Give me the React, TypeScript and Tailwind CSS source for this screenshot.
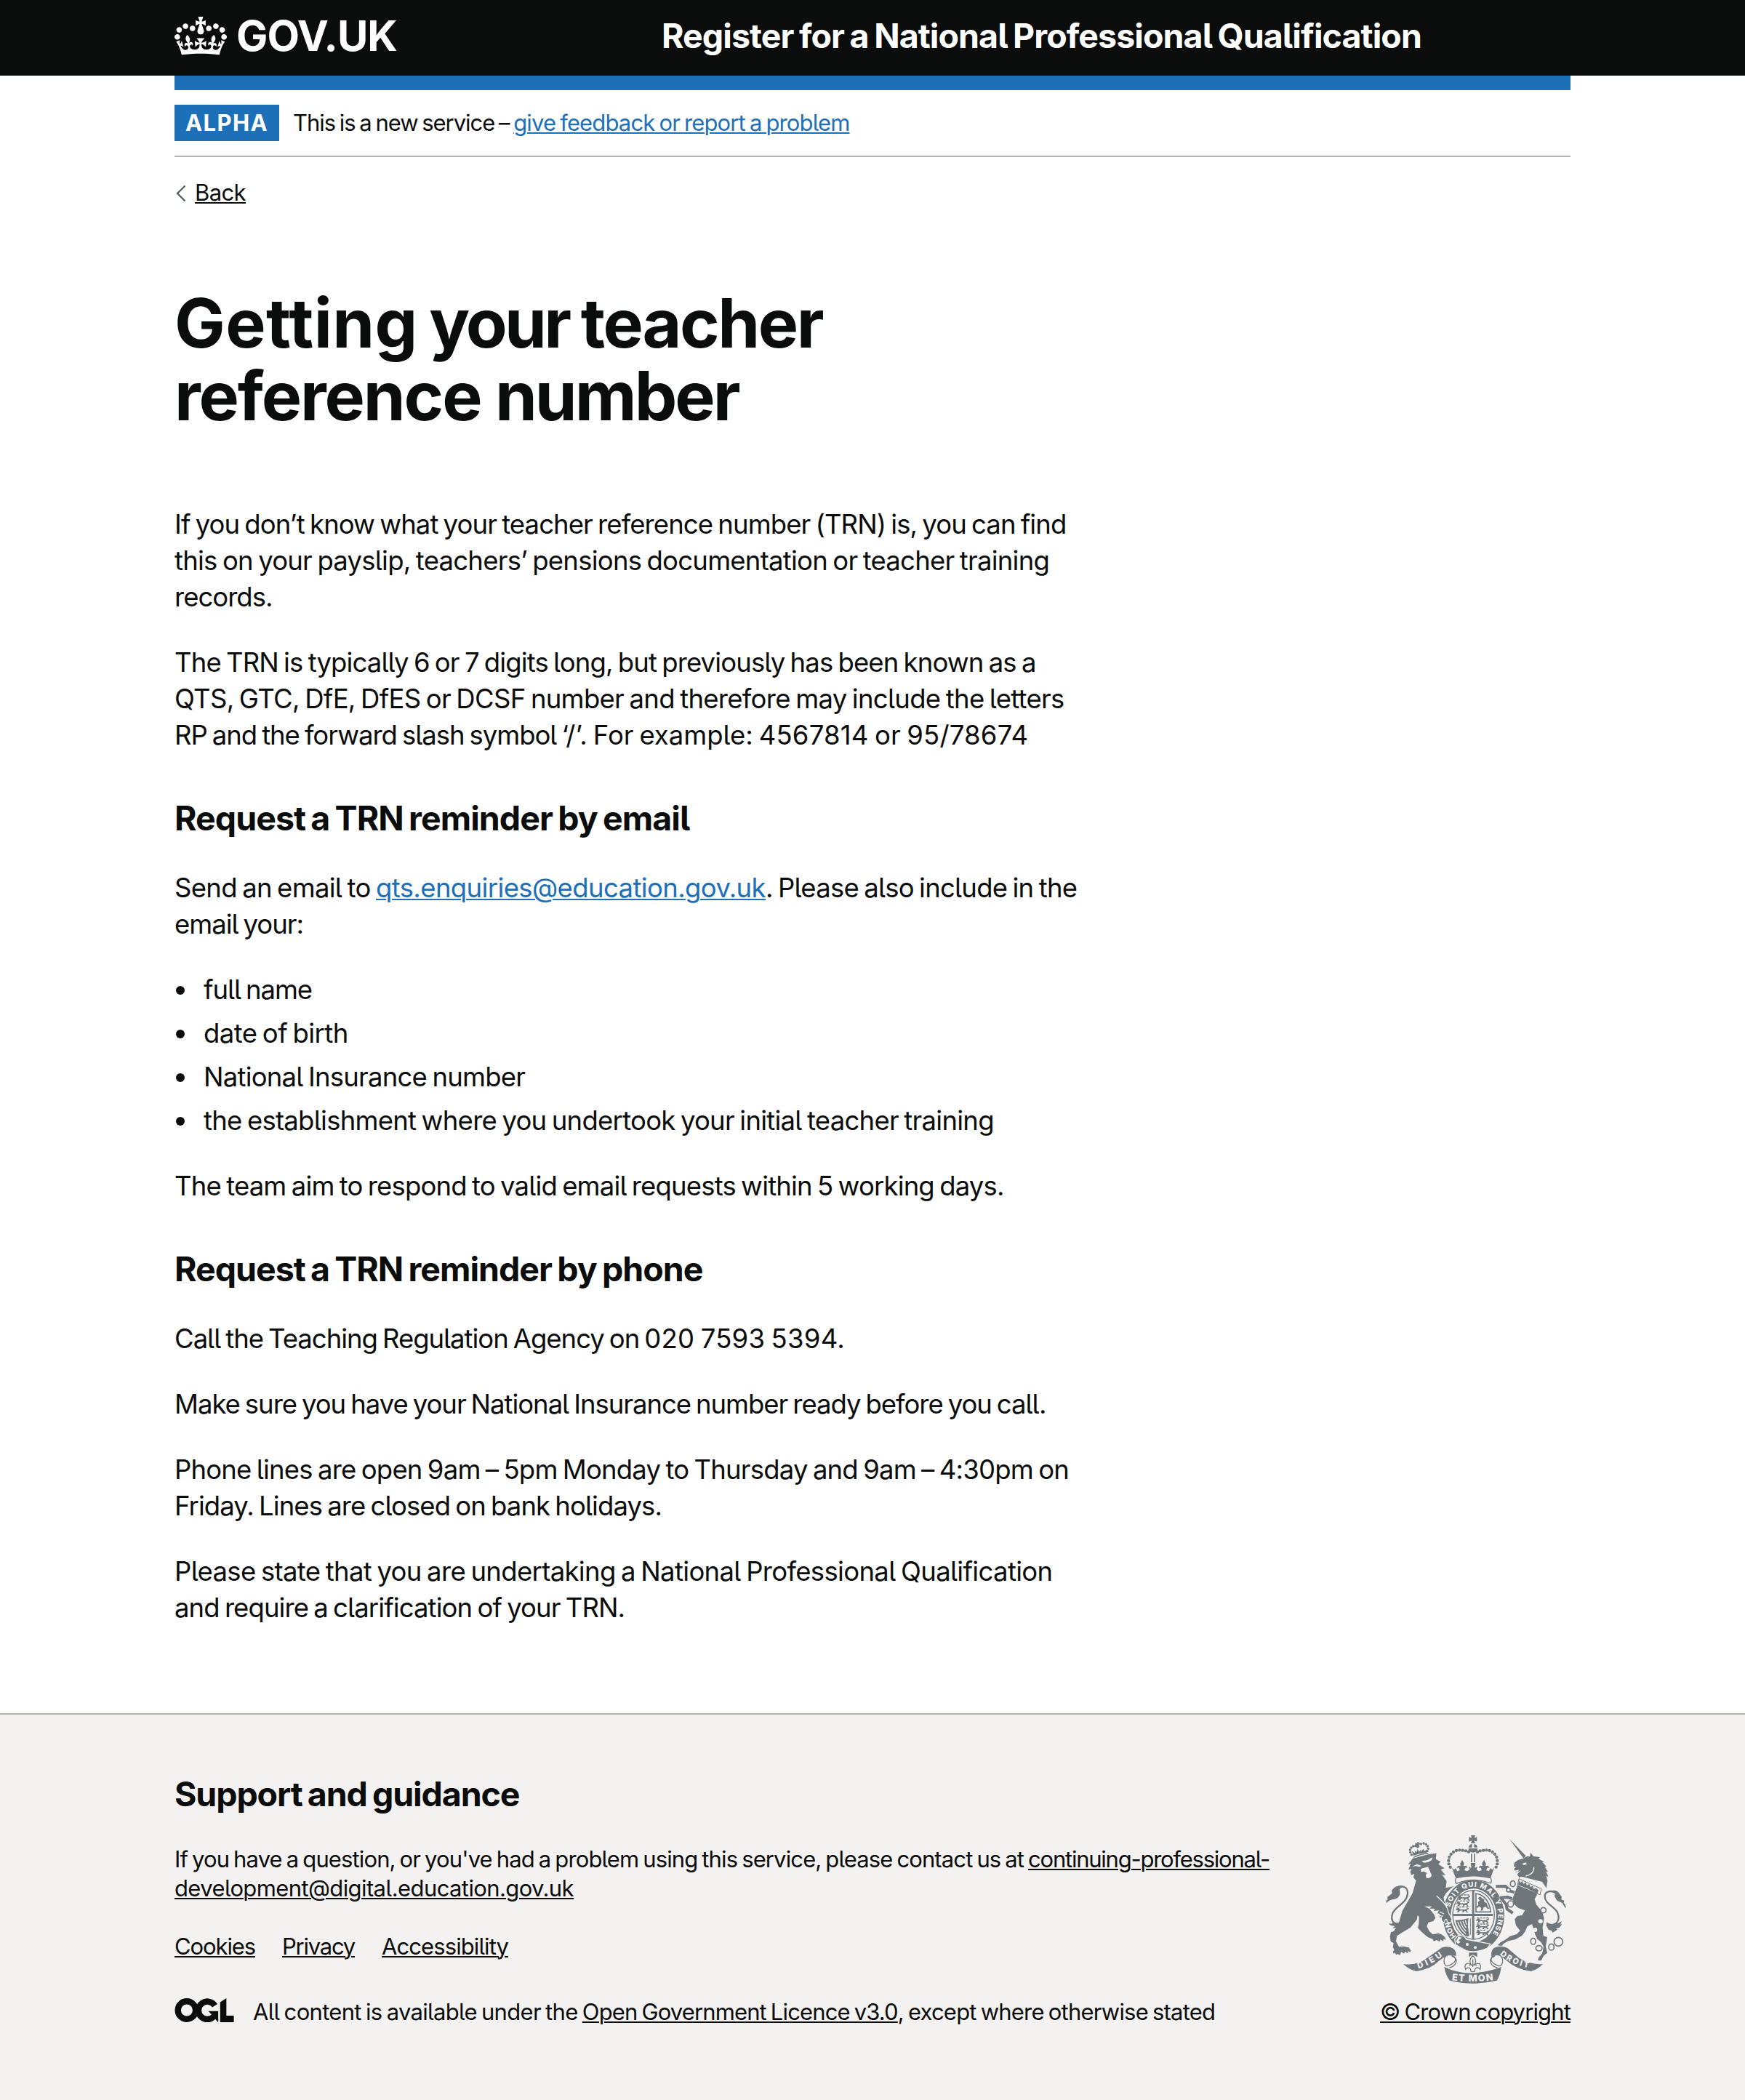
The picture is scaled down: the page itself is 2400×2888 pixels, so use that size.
import type { ReactNode } from "react";

const link = "underline decoration-2 underline-offset-2";

/** A single unbroken line of copy. */
function Line({ className = "", children }: { className?: string; children: ReactNode }) {
  return <span className={`block whitespace-pre ${className}`}>{children}</span>;
}

function Paragraph({ children }: { children: ReactNode }) {
  return <p className="mb-10 text-[36.5px] leading-[50px]">{children}</p>;
}

function SectionHeading({ className, children }: { className: string; children: ReactNode }) {
  return <h2 className={`whitespace-pre text-[46.5px] font-bold leading-[60px] [word-spacing:-2.8px] ${className}`}>{children}</h2>;
}

function Bullet({ className, children }: { className: string; children: ReactNode }) {
  return (
    <li className="flex items-center">
      <span className="ml-[2px] mr-[26px] mt-[2px] size-3 rounded-full bg-[#0b0c0c]" />
      <span className={className}>{children}</span>
    </li>
  );
}

function Crown() {
  return (
    <svg viewBox="0 0 132 97" className="h-[53px] w-[72px]" fill="currentColor" aria-hidden="true">
      <path d="M25 30.2c3.5 1.5 7.7-.2 9.1-3.7 1.5-3.6-.2-7.8-3.9-9.2-3.6-1.4-7.6.3-9.1 3.9-1.4 3.5.3 7.5 3.9 9zM9 39.5c3.6 1.5 7.8-.2 9.2-3.7 1.5-3.6-.2-7.8-3.9-9.1-3.6-1.5-7.6.2-9.1 3.8-1.4 3.5.3 7.5 3.8 9zM4.4 57.2c3.5 1.5 7.7-.2 9.1-3.8 1.5-3.6-.2-7.7-3.9-9.1-3.5-1.5-7.6.3-9.1 3.8-1.4 3.5.3 7.6 3.9 9.1zm38.3-21.4c3.5 1.5 7.7-.2 9.1-3.8 1.5-3.6-.2-7.7-3.9-9.1-3.6-1.5-7.6.3-9.1 3.8-1.3 3.6.4 7.7 3.9 9.1zm64.4-5.6c-3.6 1.5-7.8-.2-9.1-3.7-1.5-3.6.2-7.8 3.8-9.2 3.6-1.4 7.7.3 9.2 3.9 1.3 3.5-.4 7.5-3.9 9zm15.9 9.3c-3.6 1.5-7.7-.2-9.1-3.7-1.5-3.6.2-7.8 3.7-9.1 3.6-1.5 7.7.2 9.2 3.8 1.5 3.5-.3 7.5-3.8 9zm4.7 17.7c-3.6 1.5-7.8-.2-9.2-3.8-1.5-3.6.2-7.7 3.9-9.1 3.6-1.5 7.7.3 9.2 3.8 1.3 3.5-.4 7.6-3.9 9.1zM89.3 35.8c-3.6 1.5-7.8-.2-9.2-3.8-1.4-3.6.2-7.7 3.9-9.1 3.6-1.5 7.7.3 9.2 3.8 1.4 3.6-.3 7.7-3.9 9.1zM69.7 17.7l8.9 4.7V9.3l-8.9 2.8c-.2-.3-.5-.6-.9-.9L72.4 0H59.6l3.5 11.2c-.3.3-.6.5-.9.9l-8.8-2.8v13.1l8.8-4.7c.3.3.6.7.9.9l-5 15.4v.1c-.2.8-.4 1.6-.4 2.4 0 4.1 3.1 7.5 7 8.1h.2c.3 0 .7.1 1 .1.4 0 .7 0 1-.1h.2c4-.6 7.1-4.1 7.1-8.1 0-.8-.1-1.7-.4-2.4V34l-5.1-15.4c.4-.2.7-.6 1-.9zM66 92.8c16.9 0 32.8 1.1 47.1 3.2 4-16.9 8.9-26.7 14-33.5l-9.6-3.4c1 4.9 1.1 7.2 0 10.2-1.5-1.4-3-4.3-4.2-8.7L108.6 76c2.8-2 5-3.2 7.5-3.3-4.4 9.4-10 11.9-13.6 11.2-4.3-.8-6.3-4.6-5.6-7.9 1-4.7 5.7-5.9 8-.5 4.3-8.7-3-11.4-7.6-8.8 7.1-7.2 7.9-13.5 2.1-21.1-8 6.1-8.1 12.3-4.5 20.8-4.7-5.4-12.1-2.5-9.5 6.2 3.4-5.2 7.9-2 7.2 3.1-.6 4.3-6.4 7.8-13.5 7.2-10.3-.9-10.9-8-11.2-13.8 2.5-.5 7.1 1.8 11 7.3L80.2 60c-4.1 4.4-8 5.3-12.3 5.4 1.4-4.4 8-11.6 8-11.6H55.5s6.4 7.2 7.9 11.6c-4.2-.1-8-1-12.3-5.4l1.4 16.4c3.9-5.5 8.5-7.7 10.9-7.3-.3 5.8-.9 12.8-11.1 13.8-7.2.6-12.9-2.9-13.5-7.2-.7-5 3.8-8.3 7.1-3.1 2.7-8.7-4.6-11.6-9.4-6.2 3.7-8.5 3.6-14.7-4.6-20.8-5.8 7.6-5 13.9 2.2 21.1-4.7-2.6-11.9.1-7.7 8.8 2.3-5.5 7.1-4.2 8.1.5.7 3.3-1.3 7.1-5.7 7.9-3.5.7-9-1.8-13.5-11.2 2.5.1 4.7 1.3 7.5 3.3l-4.7-15.4c-1.2 4.4-2.7 7.2-4.3 8.7-1.1-3-.9-5.3 0-10.2l-9.5 3.4c5 6.9 9.9 16.7 14 33.5 14.8-2.1 30.8-3.2 47.7-3.2z" />
    </svg>
  );
}

/** Open Government Licence mark: a ring, an open ring with an arrow tail, and a notched bar. */
function OglMark() {
  return (
    <svg viewBox="0 0 246 100" className="h-[33px] w-[82px]" fill="none" stroke="currentColor" strokeWidth="25.5" role="img" aria-label="Open Government Licence">
      <circle cx="50" cy="50" r="37" />
      <path d="M167 31A37 37 0 1 0 161 78" />
      <path d="M140 54h41v45h-2l-10-12-14-2-8-10 6-7z" fill="currentColor" stroke="none" />
      <path d="M189 17L215 0v73h31v27h-57z" fill="currentColor" stroke="none" />
    </svg>
  );
}

const crownDots = [
  [344, 173], [338, 160], [337, 146], [340, 132], [347, 120], [357, 111], [369, 105], [382, 103], [395, 104], [408, 106], [420, 110],
  [533, 173], [538, 160], [538, 146], [535, 132], [528, 120], [518, 111], [506, 105], [493, 103], [480, 104], [467, 106], [456, 110],
];

const lionCrownDots = [
  [184, 122], [179, 112], [178, 102], [183, 93], [191, 87], [200, 86], [249, 107], [253, 97], [250, 87], [244, 79], [234, 75], [223, 78],
];

/** A small walking lion, three of which fill the first and fourth quarters. */
function Passant({ x, y }: { x: number; y: number }) {
  return (
    <path
      transform={`translate(${x} ${y})`}
      d="M2 5l5-5 8 1 2 5 14 1 12-1 6-6 6 1-3 5-6 3 2 6 6 4-8 1-4-6-6-1-3 6h-8l4-4-2-4-10 1-4 6H4l5-5-1-4-7 2-1-3 6-3z"
    />
  );
}

function RoyalArms() {
  const ink = "#6f777b";
  const paper = "#f3f2f1";
  return (
    <svg viewBox="72 42 750 612" className="h-[204px] w-[250px] [word-spacing:0]" fill={ink} fontFamily="Inter, sans-serif" fontWeight="800" aria-hidden="true">
      <defs>
        <path id="garter" d="M372 461A101 119 0 1 1 508 461" />
        <path id="dieu" d="M212 592Q268 576 318 536" />
        <path id="droit" d="M548 534Q594 576 672 590" />
        <path id="mon" d="M350 640Q438 650 524 639" />
      </defs>

      {/* Garter and quartered shield */}
      <ellipse cx="440" cy="373" rx="127" ry="148" />
      <ellipse cx="440" cy="372" rx="94" ry="110" fill={paper} />
      <ellipse cx="440" cy="370" rx="88" ry="103" />
      <ellipse cx="440" cy="370" rx="84" ry="99" fill={paper} />
      <path d="M355 366h165v9H355zM434 270h9v200h-9z" />
      <Passant x={372} y={291} />
      <Passant x={368} y={316} />
      <Passant x={366} y={341} />
      <Passant x={450} y={385} />
      <Passant x={450} y={410} />
      <Passant x={450} y={435} />
      <path d="M376 288h46M370 313h54M368 338h54M454 383h48M454 408h46M454 433h38" stroke={ink} strokeWidth="4" strokeDasharray="9 4" />
      <path d="M450 358v-76q52 10 61 76z" fill="none" stroke={ink} strokeWidth="5" />
      <path d="M458 301l10-6 8 7 9 5-2 7 12 9 3 12 8 9-8 2-8-10-9 4-3 11-9 3 3-12-9-7-9 8-3-5 9-10-2-11 8-6z" />
      <path d="M364 392q28 1 55-8c-4 22-2 45 4 73l-11 3c-19-9-37-31-48-68z" />
      <path d="M374 398c8 22 18 38 34 50M385 397c5 16 13 30 24 40M396 395c4 12 8 22 14 29M406 392l5 19" fill="none" stroke={paper} strokeWidth="4" />
      <path d="M427 386v66" stroke={ink} strokeWidth="3" />

      {/* Lion, its tail and its crown */}
      <g>
        <path
          d="M174 160l14-22 64-17 35-5-3 24 20 11-9 10 25 17-15 5 19 24-14-2 19 26-4 28 33-7c-17 12-30 26-40 42-6 13 14 50 19 72l12 22-4 14-12-4-3-12-8 2-5 12-7-7-2-14-8 3 0-16-9-2 6-12-22 2 6-9-23-1 10-9-31 0 21 10 18 22 7 16-9 13-20 5-7 16 11 22 14 12 23-5 13 5 14 11 3 13-8-6-2 10-11-7-4 9-12-7-12 5-5-9-20-8-24-20-17-18 4-17 1-29-6-6-3 18-26 32-36 22-20 13-4 22 12 23 20-2 21 5 9 13-5 7-7-7-1 11-12-7-4 8-12-7-4 13-9-4-8 3-4-9-7 5-1-10 5-7-6-10 3-17-12-7-3-21 4-17 12-4 20-32 15-52 42-73 15-52-11-13 4-16-13 6-4-13 6-13-14 4 10-24-10 2 8-16z"
          stroke={paper}
          strokeWidth="7"
          paintOrder="stroke"
        />
        <path d="M148 393C112 425 96 392 106 364C118 334 166 321 168 282C169 251 138 244 118 264" fill="none" stroke={ink} strokeWidth="7" />
        <path d="M72 331l9-9-2-11 7-4-2-10 20-16-2-11c15-21 35-24 49-13-15 0-17 6-15 18 3 18-10 29-31 32-14 2-24 14-33 24zM148 388c-12 22-26 18-43 13 4 6-4 8-15 3 4 9 14 12 25 12l-9 9c16 0 30-4 47-28z" />
        <g fill={paper}>
          <path d="M186 171l20-10 20 7-10 4-14-3zM226 148l22-3 23-13-4 13-15 8-17 2z" />
          <path d="M222 180l30-8 8 16 6 20-8 10-12 1-4-13 6-8-12-7-13 2z" />
          <circle cx="256" cy="206" r="10" />
        </g>
        <path d="M287 292q30 25 44 50M300 358l18 8M298 372l16 4" fill="none" stroke={paper} strokeWidth="4" />
        <path d="M193 127l-8-20 12 7 4-9 5 7 3-14 7 12 6-9 4 8 6-11 6 9 10-7-2 15q-28 0-53 12z" />
        <path d="M192 134Q220 118 253 117" fill="none" stroke={ink} strokeWidth="4" />
        <path d="M200 73l9 3-2-7h7l-1 7 9-3v8l-8-2 3 12-11 4-4-13-3 2z" />
        {lionCrownDots.map(([x, y]) => (
          <circle key={`${x}-${y}`} cx={x} cy={y} r="5" />
        ))}
      </g>

      {/* Imperial crown */}
      <path d="M429 42h18l-4 11 11-4v19l-11-4 4 11h-18l4-11-12 4V49l12 4z" />
      <path d="M419 92q4-14 15-14v14zM442 78q12 1 14 14h-14zM418 96h39q-2 17-19 17t-20-17z" />
      <path d="M429 118h5v35h-5zM441 118h5v35h-5z" />
      {crownDots.map(([x, y]) => (
        <circle key={`${x}-${y}`} cx={x} cy={y} r="6.5" />
      ))}
      <path d="M362 208L350 173L358 184L368 178L372 190L384 186L378 175L370 177L376 167L386 169L385 158L393 143L401 158L399 169L410 167L415 177L407 175L402 186L414 190L424 184L420 172L431 176L428 156L448 156L445 176L456 172L452 184L462 190L474 186L469 175L461 177L466 167L477 169L475 158L483 143L491 158L490 169L500 167L506 177L498 175L492 186L504 190L508 178L518 184L526 173L514 208L510 220Q438 204 368 220z" />
      <path d="M368 218q70-17 142 0 7 8 1 22-72-28-142 1-8-10-1-23z" fill={paper} stroke={ink} strokeWidth="4" />

      {/* Unicorn */}
      <g>
        <path d="M588 57l68 70-10 10z" />
        <path d="M644 138l18-10 10 2 4-17 10 15 28 4-6 6 24 14-8 1 17 18-7 1 13 21-8-2 10 22-9-4 5 20-4 31-18-26-85-22-10 4-8-13 14-16-8 4-12 3-7-13 8-8-9-3 2-14 15-12z" />
        <path d="M640 160l15-6 5 7-13 4zM609 188l18-4-3 7-14 1z" fill={paper} />
        <path d="M655 210q36-8 34-37" fill="none" stroke={paper} strokeWidth="4" />
        <g fill="none" strokeLinejoin="round">
          <path d="M628 284L592 272L572 252L536 253" stroke={paper} strokeWidth="19" />
          <path d="M622 312L580 297L554 299L574 326L578 346L600 362" stroke={paper} strokeWidth="19" />
          <path d="M628 284L592 272L572 252L532 253" stroke={ink} strokeWidth="12" />
          <path d="M622 312L580 297L552 299L574 326L578 346L602 363" stroke={ink} strokeWidth="12" />
        </g>
        <path
          d="M622 247L704 283L692 305L699 328L723 356L731 384L725 422L728 457L744 462L738 500L744 527L729 539L719 559L705 558L709 546L723 529L729 502L718 482L703 470L694 450L689 434L681 408L662 418L652 440L640 456L612 472L583 478L565 488L557 497L539 496L551 484L573 472L590 458L618 450L632 436L615 414L610 388L621 375L640 372L652 352L625 342L605 325L600 305L608 285z"
          stroke={paper}
          strokeWidth="4"
          paintOrder="stroke"
        />
        <path d="M627 221l93 42-6 24-93-38z" fill={paper} stroke={ink} strokeWidth="3" />
        <path d="M627 226l6 12 8-7 5 11 10-6 4 12 10-5 5 12 10-4 3 12 10-3 10 8-4 14q-42-22-80-35z" />
        <g fill={paper} stroke={ink} strokeWidth="5">
          <ellipse cx="602" cy="242" rx="10" ry="12" />
          <circle cx="584" cy="268" r="8" />
          <ellipse cx="593" cy="325" rx="12" ry="13" />
          <circle cx="728" cy="351" r="11" />
          <ellipse cx="686" cy="479" rx="10" ry="13" />
          <ellipse cx="710" cy="508" rx="13" ry="11" />
          <ellipse cx="761" cy="503" rx="11" ry="13" />
          <circle cx="790" cy="481" r="18" />
        </g>
        <circle cx="716" cy="397" r="9" fill={paper} />
        <circle cx="694" cy="432" r="9" fill={paper} />
        <path d="M742 405C780 425 800 392 786 360C773 334 734 326 734 293C735 272 760 268 778 279" fill="none" stroke={ink} strokeWidth="7" />
        <path d="M822 343l-4-17-6-5 2-10-12-4 2-11-10-14c-9-12-22-16-36-9l18 6-2 14 10 18 22 10 8 14zM742 400c10 18 22 8 48 4l14-8-6 14 8-3-12 16-14 4 6 4-20 13-4-9-12-3-10-18z" />
      </g>

      {/* Garter lettering, buckle and strap */}
      <g fill={paper} fontSize="29">
        <text>
          <textPath href="#garter" startOffset="4">
            HON
          </textPath>
        </text>
        <text>
          <textPath href="#garter" startOffset="130" textLength="392">
            SOIT QUI MAL Y PENSE
          </textPath>
        </text>
      </g>
      <path d="M362 470l16-16 22 4 12 14 98 18-14 18q-42 20-84 11l-46-25z" stroke={paper} strokeWidth="4" />
      <g fill={paper}>
        <path d="M378 459l14 6-14 10 8 8-10 7-9-9 5-10z" />
        <circle cx="414" cy="492" r="6" />
        <circle cx="447" cy="505" r="6" />
      </g>

      {/* Motto ribbons */}
      <path d="M150 573q55 8 98-25l62-43q27-8 46 4 14 10 12 32-22-12-50 4l-22 16q-30 32-92 42-32-7-54-30z" />
      <path d="M726 573q-52 4-96-23l-50-43q-30-14-56 0-14 12-10 36 16-8 42 0l26 20q32 30 94 40 30-7 50-30z" />
      <path d="M350 540c28 10 14 28-8 38-18 9-25-5-24-20 2-22 22-30 42-16 18 16 6 42-20 46" fill={paper} stroke={ink} strokeWidth="4" />
      <path d="M528 540c-28 10-14 28 8 38 18 9 25-5 24-20-2-22-22-30-42-16-18 16-6 42 20 46" fill={paper} stroke={ink} strokeWidth="4" />
      <path d="M319 585q58 28 118 25t117-25q-4 36-18 56-48 12-98 12t-96-12q-17-20-23-56z" />
      <g fill={paper}>
        <text fontSize="34">
          <textPath href="#dieu" textLength="114">
            DIEU
          </textPath>
        </text>
        <text fontSize="33">
          <textPath href="#droit" textLength="132">
            DROIT
          </textPath>
        </text>
        <text fontSize="38">
          <textPath href="#mon" textLength="172">
            ET MON
          </textPath>
        </text>
      </g>
      <path d="M421 526h34v18l-18-10-16 10z" />
      <path d="M437 539c14 12 14 24 8 36 20-12 28 2 22 20-8-10-16-8-20-2l-3 11h-14l-3-11c-4-6-12-8-20 2-6-18 2-32 22-20-6-12-6-24 8-36z" fill={paper} stroke={ink} strokeWidth="4" />
      <path d="M437 553v32M420 577h35" stroke={ink} strokeWidth="4" />
    </svg>
  );
}

export default function App() {
  return (
    <div className="flex min-h-[2888px] w-[2400px] flex-col bg-white font-['Inter','Liberation_Sans',sans-serif] text-[#0b0c0c] [font-feature-settings:'cv05'] [word-spacing:-2.2px]">
      <header className="h-[104px] bg-[#0b0c0c] text-white">
        <div className="mx-auto flex h-[124px] w-[1920px] items-start border-b-[20px] border-[#1d70b8]">
          <a className="flex w-[670px] items-start gap-[13px] pt-[23px]">
            <Crown />
            <span className="-mt-[4px] whitespace-pre text-[57.8px] font-bold leading-[60px] tracking-[-0.9px]">GOV.UK</span>
          </a>
          <a className="whitespace-pre pt-[19px] text-[46.5px] font-bold leading-[60px] tracking-[-0.93px] [word-spacing:-2.6px]">Register for a National Professional Qualification</a>
        </div>
      </header>

      <div className="mx-auto w-[1920px] pt-5">
        <div className="flex h-[92px] items-start border-b-2 border-[#b1b4b6] pt-5 text-[31px] leading-[40px] [word-spacing:-1.86px]">
          <strong className="mr-[19px] flex h-[50px] w-[144px] items-center justify-center bg-[#1d70b8] font-bold tracking-[1.4px] text-white">ALPHA</strong>
          <span className="flex whitespace-pre pt-[5px]">
            <span className="tracking-[-1.06px]">This is a new service – </span>
            <a className={`${link} tracking-[-0.86px] text-[#1d70b8]`}>give feedback or report a problem</a>
          </span>
        </div>

        <a className="mt-[29px] flex h-10 items-center text-[31px] leading-[40px]">
          <svg viewBox="0 0 28 24" className="h-6 w-7" fill="none" stroke="#505a5f" strokeWidth="2.2" aria-hidden="true">
            <path d="M14.500 2.500L4 13l10.500 10.500" />
          </svg>
          <span className={`${link} tracking-[-0.6px]`}>Back</span>
        </a>

        <main className="pt-[109px]">
          <h1 className="mb-[102px] text-[93px] font-bold leading-[100px]">
            <Line>
              <span className="tracking-[0.4px] [word-spacing:-7px]">Getting </span>
              <span className="tracking-[-3.7px] [word-spacing:-2px]">your </span>
              <span className="tracking-[-2.4px]">teacher</span>
            </Line>
            <Line>
              <span className="tracking-[-2.1px] [word-spacing:-0.5px]">reference </span>
              <span className="tracking-[-3px]">number</span>
            </Line>
          </h1>
          <Paragraph>
            <Line className="tracking-[-0.91px]">If you don’t know what your teacher reference number (TRN) is, you can find</Line>
            <Line className="tracking-[-0.76px]">this on your payslip, teachers’ pensions documentation or teacher training</Line>
            <Line className="tracking-[-1px]">records.</Line>
          </Paragraph>
          <Paragraph>
            <Line className="tracking-[-0.877px]">The TRN is typically 6 or 7 digits long, but previously has been known as a</Line>
            <Line className="tracking-[-0.705px]">QTS, GTC, DfE, DfES or DCSF number and therefore may include the letters</Line>
            <Line>
              <span className="tracking-[-1.03px]">RP and the forward slash symbol </span>
              <span className="tracking-[-0.04px]">‘/’. For example: </span>
              <span className="tracking-[0.2px]">4567814 or 95/78674</span>
            </Line>
          </Paragraph>
          <SectionHeading className="mb-[41px] mt-[59px] tracking-[-0.95px]">Request a TRN reminder by email</SectionHeading>
          <Paragraph>
            <Line>
              <span className="tracking-[-0.71px]">Send an email to </span>
              <a className={`${link} tracking-[-0.618px] text-[#1d70b8]`}>qts.enquiries@education.gov.uk</a>
              <span className="tracking-[-0.77px]">. Please also include in the</span>
            </Line>
            <Line className="tracking-[-1.03px]">email your:</Line>
          </Paragraph>
          <ul className="mb-10 flex flex-col gap-[10px] whitespace-pre text-[36.5px] leading-[50px]">
            <Bullet className="tracking-[-1.06px]">full name</Bullet>
            <Bullet className="tracking-[-0.58px]">date of birth</Bullet>
            <Bullet className="tracking-[-0.77px]">National Insurance number</Bullet>
            <Bullet className="tracking-[-0.74px]">the establishment where you undertook your initial teacher training</Bullet>
          </ul>
          <Paragraph>
            <Line className="tracking-[-0.836px]">The team aim to respond to valid email requests within 5 working days.</Line>
          </Paragraph>
          <SectionHeading className="mb-[41px] mt-[59px] tracking-[-0.99px]">Request a TRN reminder by phone</SectionHeading>
          <Paragraph>
            <Line>
              <span className="tracking-[-1.02px]">Call the Teaching Regulation Agency on </span>
              <span className="tracking-[0.25px]">020 7593 5394.</span>
            </Line>
          </Paragraph>
          <Paragraph>
            <Line className="tracking-[-1.035px]">Make sure you have your National Insurance number ready before you call.</Line>
          </Paragraph>
          <Paragraph>
            <Line className="tracking-[-0.81px]">Phone lines are open 9am – 5pm Monday to Thursday and 9am – 4:30pm on</Line>
            <Line className="tracking-[-0.92px]">Friday. Lines are closed on bank holidays.</Line>
          </Paragraph>
          <Paragraph>
            <Line className="tracking-[-0.665px]">Please state that you are undertaking a National Professional Qualification</Line>
            <Line className="tracking-[-0.9px]">and require a clarification of your TRN.</Line>
          </Paragraph>
        </main>
      </div>

      <footer className="mt-20 flex-1 border-t-2 border-[#b1b4b6] bg-[#f3f2f1]">
        <div className="mx-auto flex w-[1920px] items-end justify-between pt-[79px] text-[31px] leading-[40px] [word-spacing:-1.86px]">
          <div>
            <h2 className="mb-10 whitespace-pre text-[46.5px] font-bold leading-[60px] tracking-[-1.1px] [word-spacing:-2.8px]">Support and guidance</h2>
            <p className="mb-10">
              <Line>
                <span className="tracking-[-0.876px]">If you have a question, or you've had a problem using this service, please contact us at </span>
                <a className={`${link} tracking-[-1.242px]`}>continuing-professional-</a>
              </Line>
              <Line>
                <a className={`${link} tracking-[-0.608px]`}>development@digital.education.gov.uk</a>
              </Line>
            </p>
            <nav className="mb-[50px] flex gap-[37px] whitespace-pre">
              <a className={`${link} tracking-[-1.112px]`}>Cookies</a>
              <a className={`${link} tracking-[-1.239px]`}>Privacy</a>
              <a className={`${link} tracking-[-0.91px]`}>Accessibility</a>
            </nav>
            <div className="flex items-start">
              <span className="mr-[26px] pt-[1px]">
                <OglMark />
              </span>
              <span className="flex whitespace-pre">
                <span className="tracking-[-0.68px]">All content is available under the </span>
                <a className={`${link} tracking-[-0.87px]`}>Open Government Licence v3.0</a>
                <span className="tracking-[-0.8px]">, except where otherwise stated</span>
              </span>
            </div>
          </div>
          <a className="flex w-[262px] flex-col items-center gap-[19px]">
            <RoyalArms />
            <span className={`${link} whitespace-pre tracking-[-0.88px]`}>© Crown copyright</span>
          </a>
        </div>
      </footer>
    </div>
  );
}
